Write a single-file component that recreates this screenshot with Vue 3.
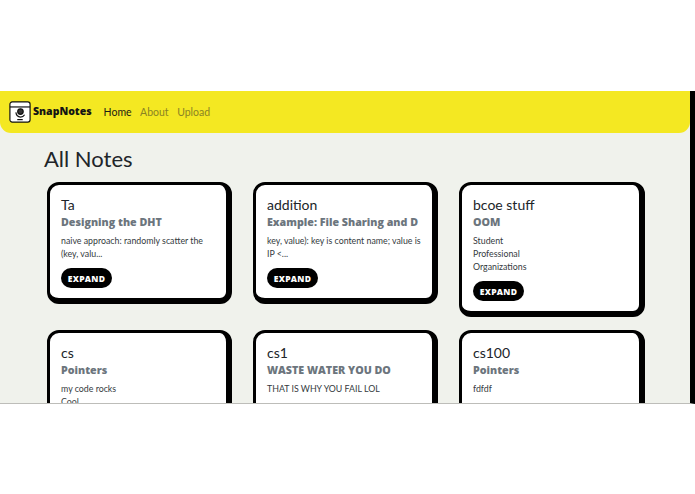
<script setup>
const notes = [
  { title: 'Ta', sub: 'Designing the DHT', lines: ['naive approach: randomly scatter the', '(key, valu...'] },
  { title: 'addition', sub: 'Example: File Sharing and D', lines: ['key, value): key is content name; value is', 'IP <...'] },
  { title: 'bcoe stuff', sub: 'OOM', lines: ['Student', 'Professional', 'Organizations'] },
  { title: 'cs', sub: 'Pointers', lines: ['my code rocks', 'Cool'] },
  { title: 'cs1', sub: 'WASTE WATER YOU DO', lines: ['THAT IS WHY YOU FAIL LOL'] },
  { title: 'cs100', sub: 'Pointers', lines: ['fdfdf'] }
]
</script>

<template>
  <div class="page">
    <div class="frame">
      <div class="app">
        <nav class="nav">
          <svg class="logo" viewBox="0 0 24 24" width="22" height="22" fill="none" stroke="#111" stroke-width="1.3">
            <rect x="1" y="1" width="22" height="22" rx="2.5" fill="#fff" />
            <path d="M1 6.500h22" />
            <circle cx="12.500" cy="11.500" r="3" fill="#333" />
            <path d="M7.500 12.500c.5 3.500 3 5 5 5s3.500-.8 4.500-2.500" />
            <path d="M9 20.300h6" />
          </svg>
          <span class="brand">SnapNotes</span>
          <a class="link active">Home</a>
          <a class="link">About</a>
          <a class="link">Upload</a>
        </nav>
        <main class="main">
          <h1 class="heading">All Notes</h1>
          <div class="grid">
            <article v-for="n in notes" :key="n.title" class="card">
              <h2 class="title">{{ n.title }}</h2>
              <h3 class="sub">{{ n.sub }}</h3>
              <p class="body">
                <span v-for="l in n.lines" :key="l" class="line">{{ l }}</span>
              </p>
              <button class="btn">EXPAND</button>
            </article>
          </div>
        </main>
      </div>
    </div>
  </div>
</template>

<style>
html, body { margin: 0; background: #fff; }
</style>

<style scoped>
.page {
  height: 494px;
  padding-top: 91px;
  box-sizing: border-box;
  overflow: hidden;
  background: #fff;
}
.frame {
  height: 313px;
  box-sizing: border-box;
  overflow: hidden;
  border-bottom: 1px solid #bdbdb9;
  border-right: 5px solid #000;
  background: #f0f2ec;
  font-family: Lato, sans-serif;
}
.nav {
  height: 42px;
  display: flex;
  align-items: center;
  padding-left: 9px;
  background: #f4e822;
  border-radius: 0 0 11px 11px;
}
.logo { flex: none; }
.brand {
  margin-left: 2px;
  margin-right: 12px;
  padding-bottom: 2px;
  font-family: "Open Sans", sans-serif;
  font-weight: 800;
  font-size: 10.500px;
  color: #141414;
}
.link {
  margin-right: 8.500px;
  font-size: 10.500px;
  color: #8a8324;
}
.link.active { color: #1c1c14; }
.main { padding: 12px 45px 0 47px; }
.heading {
  margin: 0 0 9px -3px;
  font-weight: 400;
  font-size: 22px;
  line-height: 28px;
  color: #212529;
}
.grid {
  display: grid;
  grid-template-columns: 185px 185px 186px;
  column-gap: 21px;
  row-gap: 13px;
  align-items: start;
}
.card {
  box-sizing: border-box;
  background: #fff;
  border: solid #000;
  border-width: 3px 6px 6px 3px;
  border-radius: 12px;
  padding: 11px 10px 10px 11px;
}
.title {
  margin: 0;
  font-weight: 400;
  font-size: 14px;
  line-height: 18px;
  color: #212529;
}
.sub {
  margin: 0 0 4px;
  font-family: "Open Sans", sans-serif;
  font-weight: 800;
  font-size: 10.700px;
  line-height: 16px;
  color: #6c757d;
  white-space: nowrap;
}
.body {
  margin: 0 0 8px;
  font-size: 8.800px;
  line-height: 13px;
  color: #343a40;
  white-space: nowrap;
}
.line { display: block; }
.btn {
  display: block;
  width: 51px;
  height: 20px;
  padding: 0;
  border: 0;
  border-radius: 10px;
  background: #000;
  color: #fff;
  font-family: "Open Sans", sans-serif;
  font-weight: 800;
  font-size: 8.500px;
  letter-spacing: .3px;
}
</style>
